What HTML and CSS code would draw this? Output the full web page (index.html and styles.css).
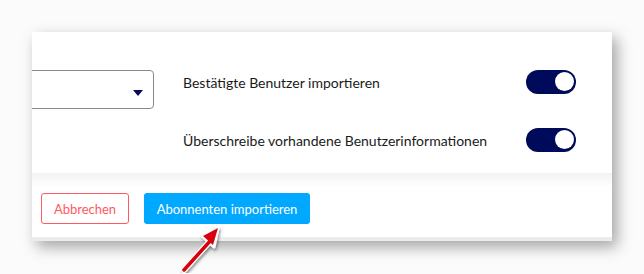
FILE: index.html
```html
<!DOCTYPE html>
<html lang="de">
<head>
  <meta charset="UTF-8" />
  <title>Abonnenten importieren</title>
  <link rel="stylesheet" href="styles.css">
</head>
<body>
  <div class="panel">
    <div class="panel-body">
      <div class="select">
        <span class="caret"></span>
      </div>
      <div class="options">
        <div class="option">
          <span>Bestätigte Benutzer importieren</span>
          <span class="toggle on"><span class="knob"></span></span>
        </div>
        <div class="option">
          <span>Überschreibe vorhandene Benutzerinformationen</span>
          <span class="toggle on"><span class="knob"></span></span>
        </div>
      </div>
    </div>
    <div class="panel-footer">
      <button class="btn abbrechen">Abbrechen</button>
      <button class="btn importieren">Abonnenten importieren</button>
    </div>
  </div>

  <!-- Pfeil (Markierung im Screenshot) -->
  <svg class="pfeil" width="60" height="56" viewBox="0 0 60 56">
    <defs>
      <filter id="schatten" x="-30%" y="-30%" width="160%" height="160%">
        <feDropShadow dx="1" dy="2" stdDeviation="1.5" flood-color="#000" flood-opacity="0.45" />
      </filter>
    </defs>
    <g filter="url(#schatten)">
      <path d="M6 50 L33 20" stroke="#fff" stroke-width="6" stroke-linecap="round" />
      <path d="M40 8 L24 16 L36 27 Z" fill="#fff" stroke="#fff" stroke-width="3" stroke-linejoin="round" />
      <path d="M6 50 L33 20" stroke="#d8000c" stroke-width="3.5" stroke-linecap="round" />
      <path d="M40 8 L25 16 L35 25 Z" fill="#d8000c" />
    </g>
  </svg>
</body>
</html>
```

FILE: styles.css
```css
body {
  font-family: 'Lato', sans-serif;
  background-color: #fbfbfb;
  margin: 0;
  padding: 32px;
  position: relative;
}

.panel {
  width: 580px;
  background-color: white;
  overflow: hidden;
  box-shadow: 5px 6px 14px rgba(0, 0, 0, 0.35);
}

.panel-body {
  display: flex;
  gap: 29px;
  padding: 38px 36px 21px 0;
}

.select {
  flex: none;
  width: 131px;
  height: 37px;
  margin-left: -11px;
  border: 1px solid #8a8a8a;
  border-radius: 4px;
  position: relative;
}

.caret {
  position: absolute;
  right: 10px;
  top: 19px;
  width: 0;
  height: 0;
  border-left: 5px solid transparent;
  border-right: 5px solid transparent;
  border-top: 6px solid #0a0a5c;
}

.options {
  flex: 1;
  display: flex;
  flex-direction: column;
  gap: 34px;
}

.option {
  display: flex;
  justify-content: space-between;
  align-items: center;
  height: 24px;
  font-size: 14px;
  color: #1a1a1a;
}

.toggle {
  width: 50px;
  height: 24px;
  border-radius: 12px;
  background-color: #000a5a;
  position: relative;
}

.knob {
  position: absolute;
  right: 2px;
  top: 2px;
  width: 19px;
  height: 19px;
  border-radius: 50%;
  background-color: white;
}

.panel-footer {
  display: flex;
  gap: 15px;
  padding: 20px 0 13px 9px;
  background: linear-gradient(#f2f2f2, #ffffff 14px);
  border-bottom: 4px solid #ececec;
}

.btn {
  height: 31px;
  padding: 0;
  font-family: 'Lato', sans-serif;
  font-size: 13px;
  white-space: nowrap;
  border-radius: 3px;
  cursor: pointer;
}

.btn.abbrechen {
  width: 88px;
  background-color: white;
  color: #ff5a5f;
  border: 1px solid #ff5a5f;
}

.btn.importieren {
  width: 166px;
  background-color: #00a8ff;
  color: white;
  border: none;
}

.pfeil {
  position: absolute;
  left: 178px;
  top: 220px;
}
```
